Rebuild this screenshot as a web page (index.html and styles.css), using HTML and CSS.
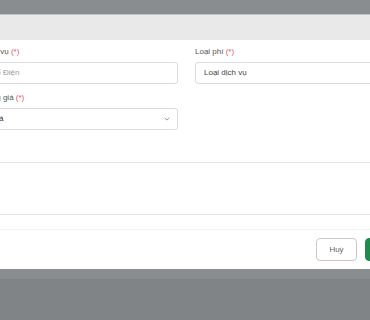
FILE: index.html
```html
<!DOCTYPE html>
<html lang="vi">
<head>
<meta charset="utf-8">
<title>Modal</title>
<link rel="stylesheet" href="styles.css">
</head>
<body>
<div class="page">
  <div class="backdrop-top"></div>
  <div class="modal">
    <div class="modal-header"></div>
    <div class="modal-body">
      <div class="grid">
        <div class="field">
          <label class="label">Dịch vụ <span class="req">(*)</span></label>
          <div class="input placeholder">Số Điện</div>
        </div>
        <div class="field">
          <label class="label">Loại phí <span class="req">(*)</span></label>
          <div class="input">Loại dịch vụ</div>
        </div>
        <div class="field">
          <label class="label">Bảng giá <span class="req">(*)</span></label>
          <div class="input select">
            <span>Giá</span>
            <svg class="chev" width="6" height="4" viewBox="0 0 6 4"><path d="M0.6 0.8 L3 3.1 L5.4 0.8" fill="none" stroke="#8a8a8a" stroke-width="0.9"/></svg>
          </div>
        </div>
      </div>
      <div class="box"></div>
    </div>
    <div class="modal-footer">
      <button class="btn btn-cancel">Huỷ</button>
      <button class="btn btn-save">Lưu</button>
    </div>
  </div>
  <div class="backdrop-bottom"></div>
</div>
</body>
</html>
```

FILE: styles.css
```css
html, body {
  margin: 0;
  padding: 0;
}
body {
  background: #818487;
  font-family: "Liberation Sans", Arial, sans-serif;
  overflow: hidden;
  width: 370px;
  height: 320px;
}
.page {
  background: #8a8d90;
}
.backdrop-top {
  height: 14px;
}
.backdrop-bottom {
  height: 10px;
}
.modal {
  margin-left: -40px;
  width: 460px;
  background: #ffffff;
  border-top: 1px solid #c2c4c6;
}
.modal-header {
  height: 25px;
  background: #e9e9e9;
}
.modal-body {
  padding: 7px 0 14px 22px;
}
.grid {
  display: grid;
  grid-template-columns: 196px 196px;
  column-gap: 17px;
  row-gap: 9px;
}
.field {
  display: flex;
  flex-direction: column;
}
.label {
  font-size: 8px;
  line-height: 10px;
  height: 10px;
  color: #555555;
  margin-bottom: 5px;
}
.req {
  color: #e8585a;
}
.input {
  box-sizing: border-box;
  height: 22px;
  border: 1px solid #dcdcdc;
  border-radius: 3px;
  padding: 0 8px;
  font-size: 8px;
  line-height: 20px;
  color: #444444;
  display: flex;
  align-items: center;
}
.placeholder {
  color: #9a9a9a;
}
.select {
  justify-content: space-between;
  color: #333333;
  padding-right: 7px;
}
.chev {
  display: block;
}
.box {
  margin-top: 32px;
  margin-left: -22px;
  height: 51px;
  border-top: 1px solid #e4e4e4;
  border-bottom: 1px solid #e4e4e4;
}
.modal-footer {
  border-top: 1px solid #f3f3f3;
  padding: 8px 15px 8px 0;
  display: flex;
  justify-content: flex-end;
  gap: 8px;
}
.btn {
  box-sizing: border-box;
  height: 23px;
  border-radius: 4px;
  font-family: "Liberation Sans", Arial, sans-serif;
  font-size: 8px;
  padding: 0;
}
.btn-cancel {
  width: 41px;
  background: #ffffff;
  border: 1px solid #c9c9c9;
  color: #666666;
}
.btn-save {
  width: 40px;
  background: #1f8a4c;
  border: 1px solid #1f8a4c;
  color: #ffffff;
}
```
